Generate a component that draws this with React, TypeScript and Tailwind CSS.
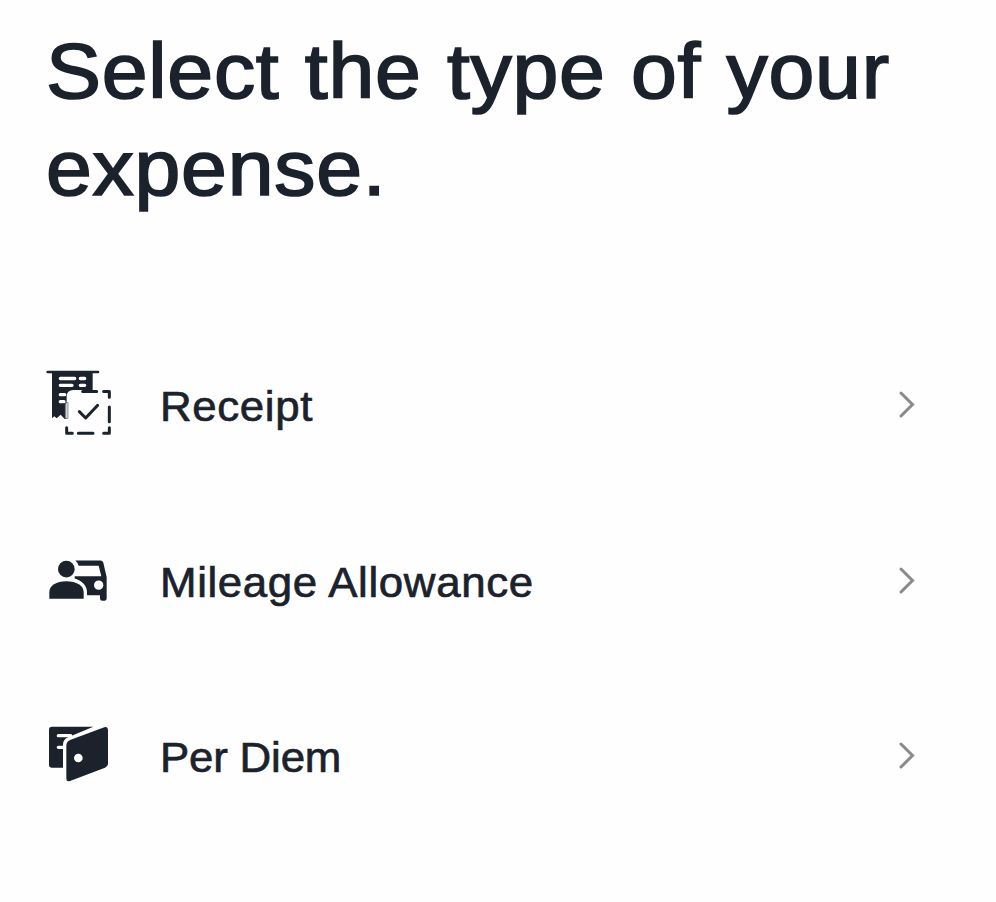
import React from 'react';

function ReceiptIcon() {
  return (
    <svg viewBox="0 11 240 252" className="h-[84px] w-20 shrink-0" fill="none">
      <path d="M36 38H158V92H100Q80 92 80 112V179H74L62 166L50 177L43 171L36 177Z" fill="#1b222c" />
      <path d="M23 38H174" stroke="#1b222c" strokeWidth="8" strokeLinecap="round" />
      <path d="M61 57.500H104M121 57.500H134M61 78H96M121 78H134M61 106H74M61 127H72" stroke="#fff" strokeWidth="10" strokeLinecap="round" />
      <path d="M76 134Q79 129 84 129V177H76Z" fill="#d2d3d5" stroke="#6b7078" strokeWidth="2" />
      <g stroke="#1b222c" strokeWidth="9" strokeLinecap="round" strokeLinejoin="round">
        <path d="M128 96.500H170M191 96.500H208V114M208 143V187M208 205V222H191M159 222H115M97 222H80V205" />
        <path d="M118 157L137 176L173 138" />
      </g>
    </svg>
  );
}

function MileageIcon() {
  return (
    <svg viewBox="0 -34.5 240 252" className="h-[84px] w-20 shrink-0">
      <g fill="#1b222c">
        <circle cx="79" cy="56" r="25" />
        <path d="M28 145V125C28 104 49 92 79 92S131 104 131 125V145Z" />
        <path
          fillRule="evenodd"
          d="M106 30H181Q188 30 190 37L200 80V144Q200 151 193 151H187Q180 151 180 144V134H141V125C141 106 128 92 104 84V77H184L176 46H116Q114 37 106 30ZM176 90A14 14 0 1 0 176 118A14 14 0 1 0 176 90Z"
        />
      </g>
    </svg>
  );
}

function PerDiemIcon() {
  return (
    <svg viewBox="0 -4 240 252" className="h-[84px] w-20 shrink-0">
      <path d="M36 34H160L86 65Q69 72 69 87V157H36Q27 157 27 148V43Q27 34 36 34Z" fill="#1b222c" />
      <path d="M55 61H92M55 96H72" stroke="#fff" strokeWidth="10" strokeLinecap="round" />
      <path
        fillRule="evenodd"
        d="M92 73L193 36Q204 33 204 43V144Q204 153 195 157L90 197Q79 200 79 190V91Q79 78 92 73ZM115 115A13 13 0 1 0 115 141A13 13 0 1 0 115 115Z"
        fill="#1b222c"
      />
    </svg>
  );
}

function Chevron() {
  return (
    <svg viewBox="0 0 20 32" className="h-8 w-5 shrink-0" fill="none">
      <path d="M4 4L15.500 15.500L4 27" stroke="#8a8a8a" strokeWidth="3" strokeLinecap="round" />
    </svg>
  );
}

const expenseTypes = [
  { label: 'Receipt', Icon: ReceiptIcon, tracking: 'tracking-[0.6px]' },
  { label: 'Mileage Allowance', Icon: MileageIcon, tracking: 'tracking-[0.6px]' },
  { label: 'Per Diem', Icon: PerDiemIcon, tracking: 'tracking-[-0.2px]' },
];

export default function App() {
  return (
    <main className="h-[902px] w-[996px] overflow-hidden bg-[#fefefe] pt-[23px] font-['Liberation_Sans',Arial,sans-serif] text-[#1b222c]">
      <h1 className="ml-[46px] w-[830px] origin-left scale-x-[1.07] text-[77px] leading-[97px] tracking-[0.7px] [word-spacing:1.6px] [-webkit-text-stroke:1.7px_#1b222c]">
        Select the type of your expense.
      </h1>
      <ul className="mt-[100.5px]">
        {expenseTypes.map(({ label, Icon, tracking }) => (
          <li key={label}>
            <button className="flex h-[175.5px] w-full items-center pr-[79px] pl-10 text-left">
              <Icon />
              <span
                className={`ml-[40px] flex-1 origin-left scale-x-[1.02] pt-[3px] text-[43px] leading-none [-webkit-text-stroke:0.7px_#1b222c] ${tracking}`}
              >
                {label}
              </span>
              <Chevron />
            </button>
          </li>
        ))}
      </ul>
    </main>
  );
}
